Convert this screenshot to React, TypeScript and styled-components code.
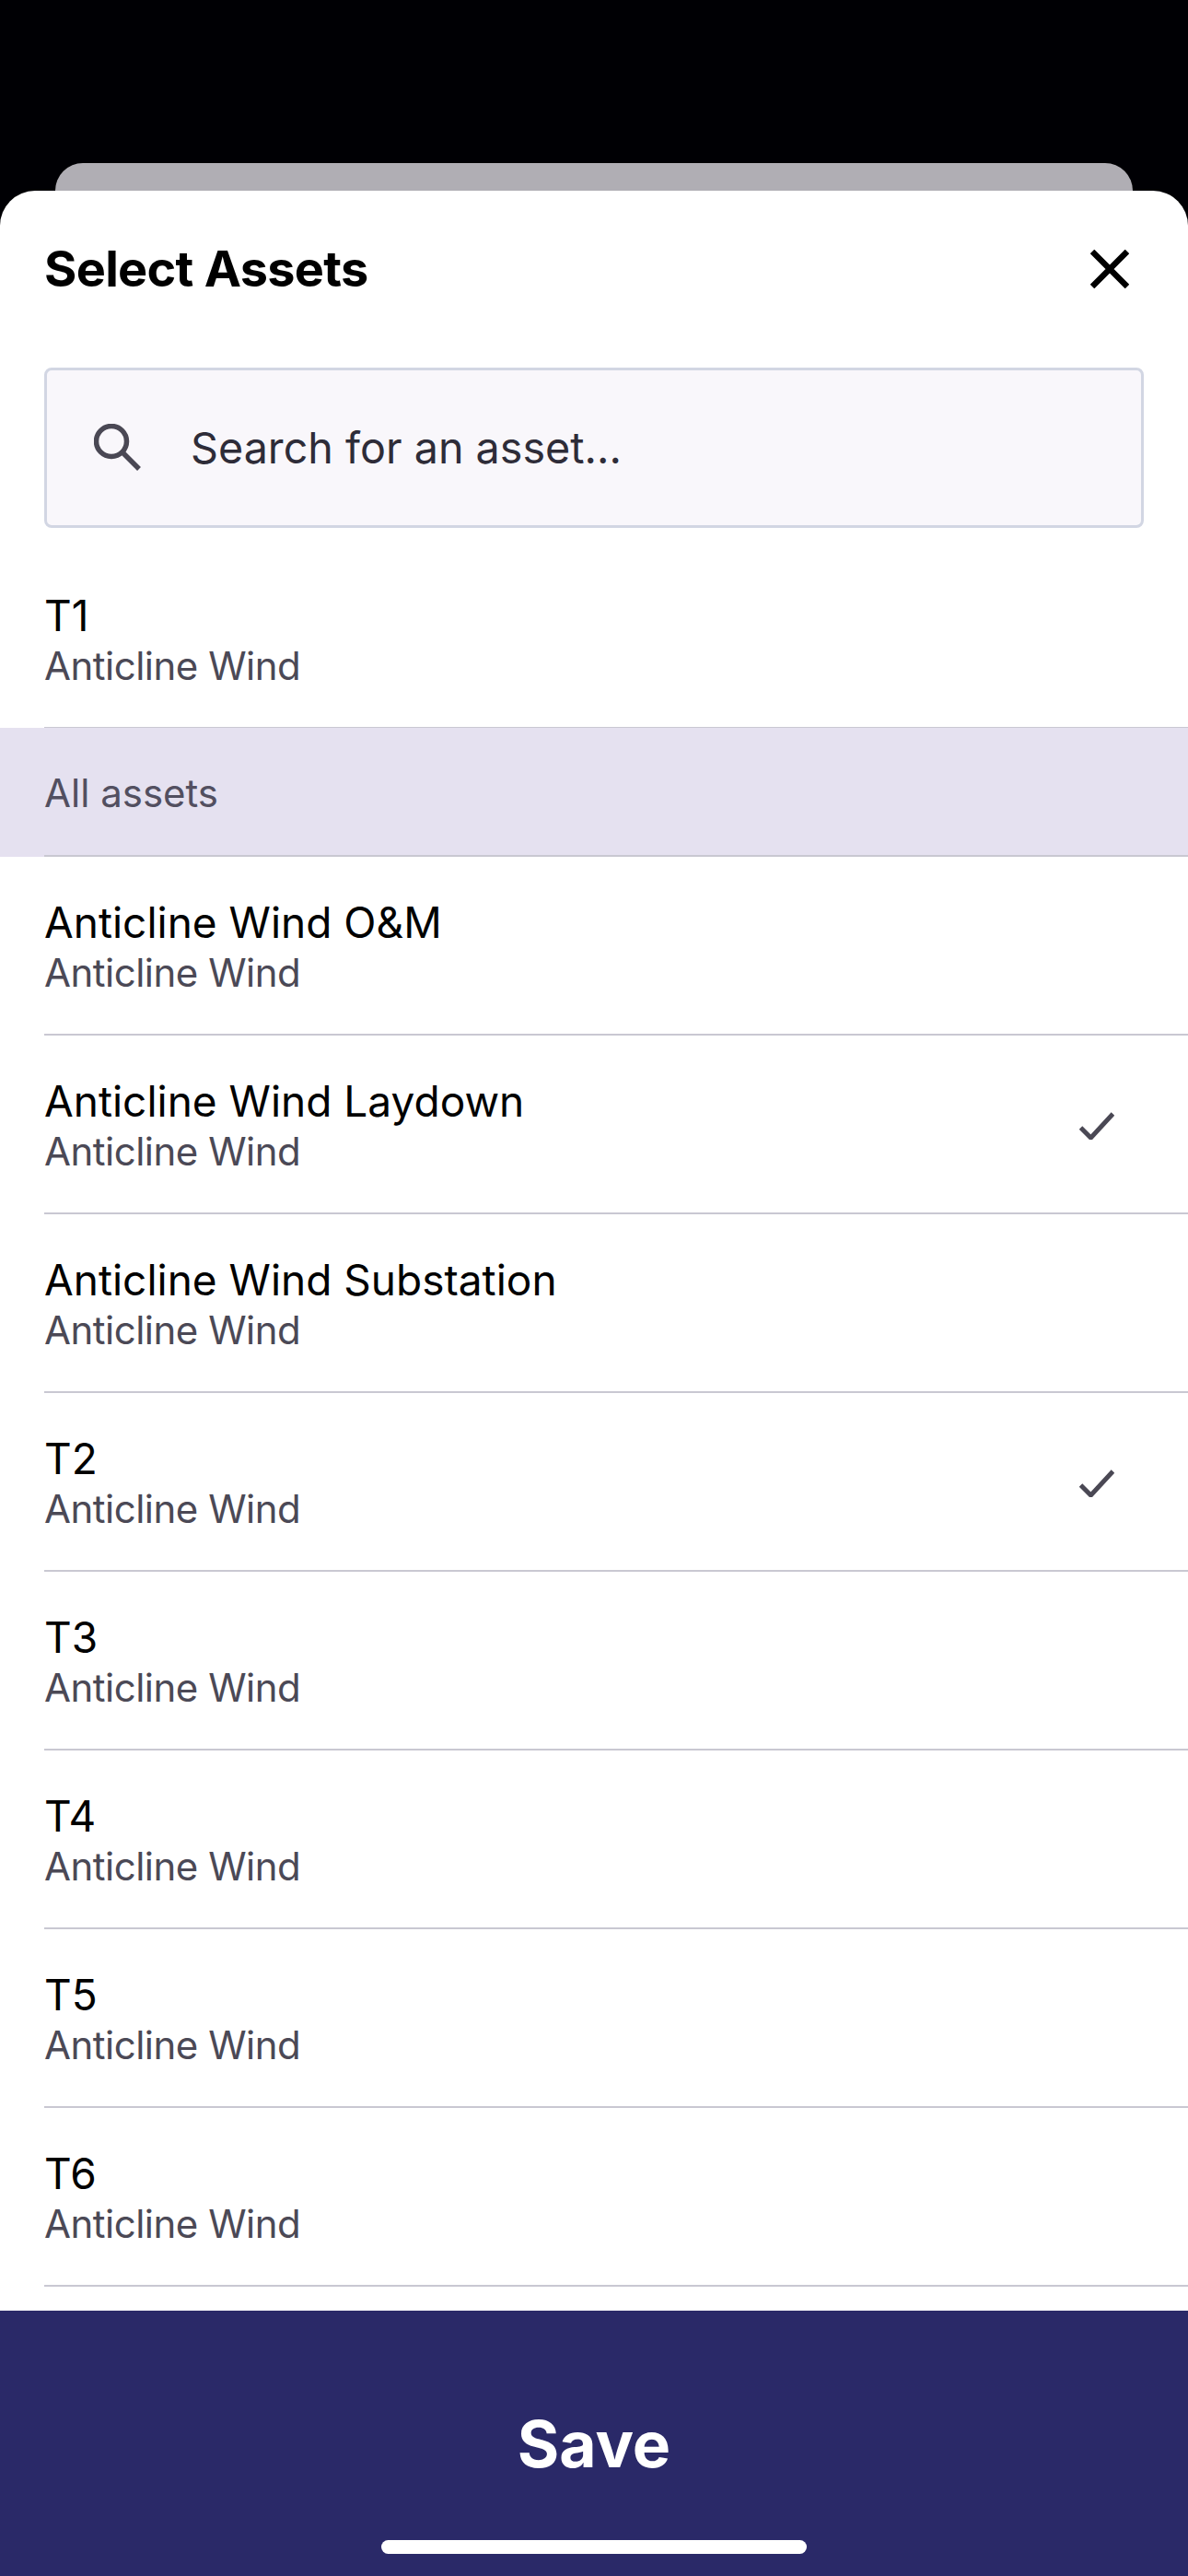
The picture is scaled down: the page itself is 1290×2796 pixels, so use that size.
import React from "react";
import styled, { createGlobalStyle } from "styled-components";

interface Asset {
  name: string;
  selected?: boolean;
}

const pinnedAssets: Asset[] = [{ name: "T1" }];

const allAssets: Asset[] = [
  { name: "Anticline Wind O&M" },
  { name: "Anticline Wind Laydown", selected: true },
  { name: "Anticline Wind Substation" },
  { name: "T2", selected: true },
  { name: "T3" },
  { name: "T4" },
  { name: "T5" },
  { name: "T6" },
];

const AssetItem = ({ asset }: { asset: Asset }) => {
  return (
    <Row>
      <RowText>
        <AssetName>{asset.name}</AssetName>
        <SiteName>Anticline Wind</SiteName>
      </RowText>
      {asset.selected && (
        <CheckIcon viewBox="0 0 38 30">
          <path d="M1.5 17 L12.5 28 L36.5 2" />
        </CheckIcon>
      )}
    </Row>
  );
};

export default function App() {
  return (
    <Screen>
      <GlobalStyle />
      <BackCard />
      <Sheet>
        <Header>
          <Title>Select Assets</Title>
          <CloseIcon viewBox="0 0 42 42">
            <path d="M2 2 L40 40 M40 2 L2 40" />
          </CloseIcon>
        </Header>
        <SearchBox>
          <SearchIcon viewBox="0 0 52 52">
            <circle cx="19" cy="19" r="16.5" />
            <path d="M31 31 L49 49" />
          </SearchIcon>
          <SearchText>Search for an asset...</SearchText>
        </SearchBox>
        <List>
          {pinnedAssets.map((asset) => (
            <AssetItem key={asset.name} asset={asset} />
          ))}
          <SectionBand>
            <SectionInner>
              <SectionLabel>All assets</SectionLabel>
            </SectionInner>
          </SectionBand>
          {allAssets.map((asset) => (
            <AssetItem key={asset.name} asset={asset} />
          ))}
        </List>
        <Footer>
          <SaveLabel>Save</SaveLabel>
          <HomeIndicator />
        </Footer>
      </Sheet>
    </Screen>
  );
}

const GlobalStyle = createGlobalStyle`
  html, body {
    margin: 0;
    padding: 0;
    background: #000;
  }
  * {
    box-sizing: border-box;
  }
`;

const Screen = styled.div`
  display: flex;
  flex-direction: column;
  width: 1290px;
  height: 2796px;
  padding-top: 177px;
  background: #000004;
  font-family: Inter, "Liberation Sans", sans-serif;
  overflow: hidden;
`;

const BackCard = styled.div`
  flex: none;
  height: 30px;
  margin: 0 60px;
  border-radius: 30px 30px 0 0;
  background: #b0aeb4;
`;

const Sheet = styled.div`
  flex: 1;
  display: flex;
  flex-direction: column;
  min-height: 0;
  border-radius: 38px 38px 0 0;
  background: #fff;
  overflow: hidden;
`;

const Header = styled.div`
  flex: none;
  display: flex;
  justify-content: space-between;
  align-items: center;
  height: 192px;
  padding: 0 64px 23px 48px;
`;

const Title = styled.h1`
  margin: 0;
  font-size: 54px;
  line-height: 64px;
  font-weight: 700;
  letter-spacing: -0.7px;
  color: #000;
`;

const CloseIcon = styled.svg`
  width: 42px;
  height: 42px;
  fill: none;
  stroke: #000;
  stroke-width: 6.5;
`;

const SearchBox = styled.div`
  flex: none;
  display: flex;
  align-items: center;
  gap: 53px;
  height: 174px;
  margin: 0 48px;
  padding: 0 0 0 51px;
  border: 3px solid #d2d6e3;
  border-radius: 8px;
  background: #f9f7fb;
`;

const SearchIcon = styled.svg`
  flex: none;
  width: 52px;
  height: 52px;
  fill: none;
  stroke: #4a4854;
  stroke-width: 5.5;
`;

const SearchText = styled.span`
  font-size: 46.7px;
  line-height: 56px;
  color: #2e2c38;
`;

const List = styled.div`
  flex: 1;
  min-height: 0;
  padding-top: 24px;
  overflow: hidden;
`;

const Row = styled.div`
  display: flex;
  align-items: center;
  justify-content: space-between;
  height: 194px;
  margin-left: 48px;
  padding: 0 80px 0 0;
  border-bottom: 2px solid #c9c8d2;
  background: #fff;
`;

const RowText = styled.div`
  display: flex;
  flex-direction: column;
  padding-top: 4px;
`;

const AssetName = styled.div`
  font-size: 46px;
  line-height: 54px;
  color: #000;
`;

const SiteName = styled.div`
  margin-top: 2px;
  font-size: 42px;
  line-height: 52px;
  letter-spacing: -0.5px;
  color: #4b4956;
`;

const CheckIcon = styled.svg`
  width: 38px;
  height: 30px;
  margin-top: 4px;
  fill: none;
  stroke: #4a4854;
  stroke-width: 5;
`;

const SectionBand = styled.div`
  height: 140px;
  margin-top: -1px;
  background: #e5e1f0;
`;

const SectionInner = styled.div`
  display: flex;
  align-items: center;
  height: 100%;
  margin-left: 48px;
  padding-top: 4px;
  border-bottom: 2px solid #c9c8d2;
`;

const SectionLabel = styled.span`
  font-size: 42px;
  line-height: 52px;
  color: #524f60;
`;

const Footer = styled.div`
  flex: none;
  display: flex;
  flex-direction: column;
  align-items: center;
  height: 288px;
  padding-top: 105px;
  background: #2a2968;
`;

const SaveLabel = styled.div`
  font-size: 69.5px;
  line-height: 80px;
  font-weight: 700;
  color: #fff;
`;

const HomeIndicator = styled.div`
  width: 462px;
  height: 15px;
  margin-top: 64px;
  border-radius: 8px;
  background: #fff;
`;
